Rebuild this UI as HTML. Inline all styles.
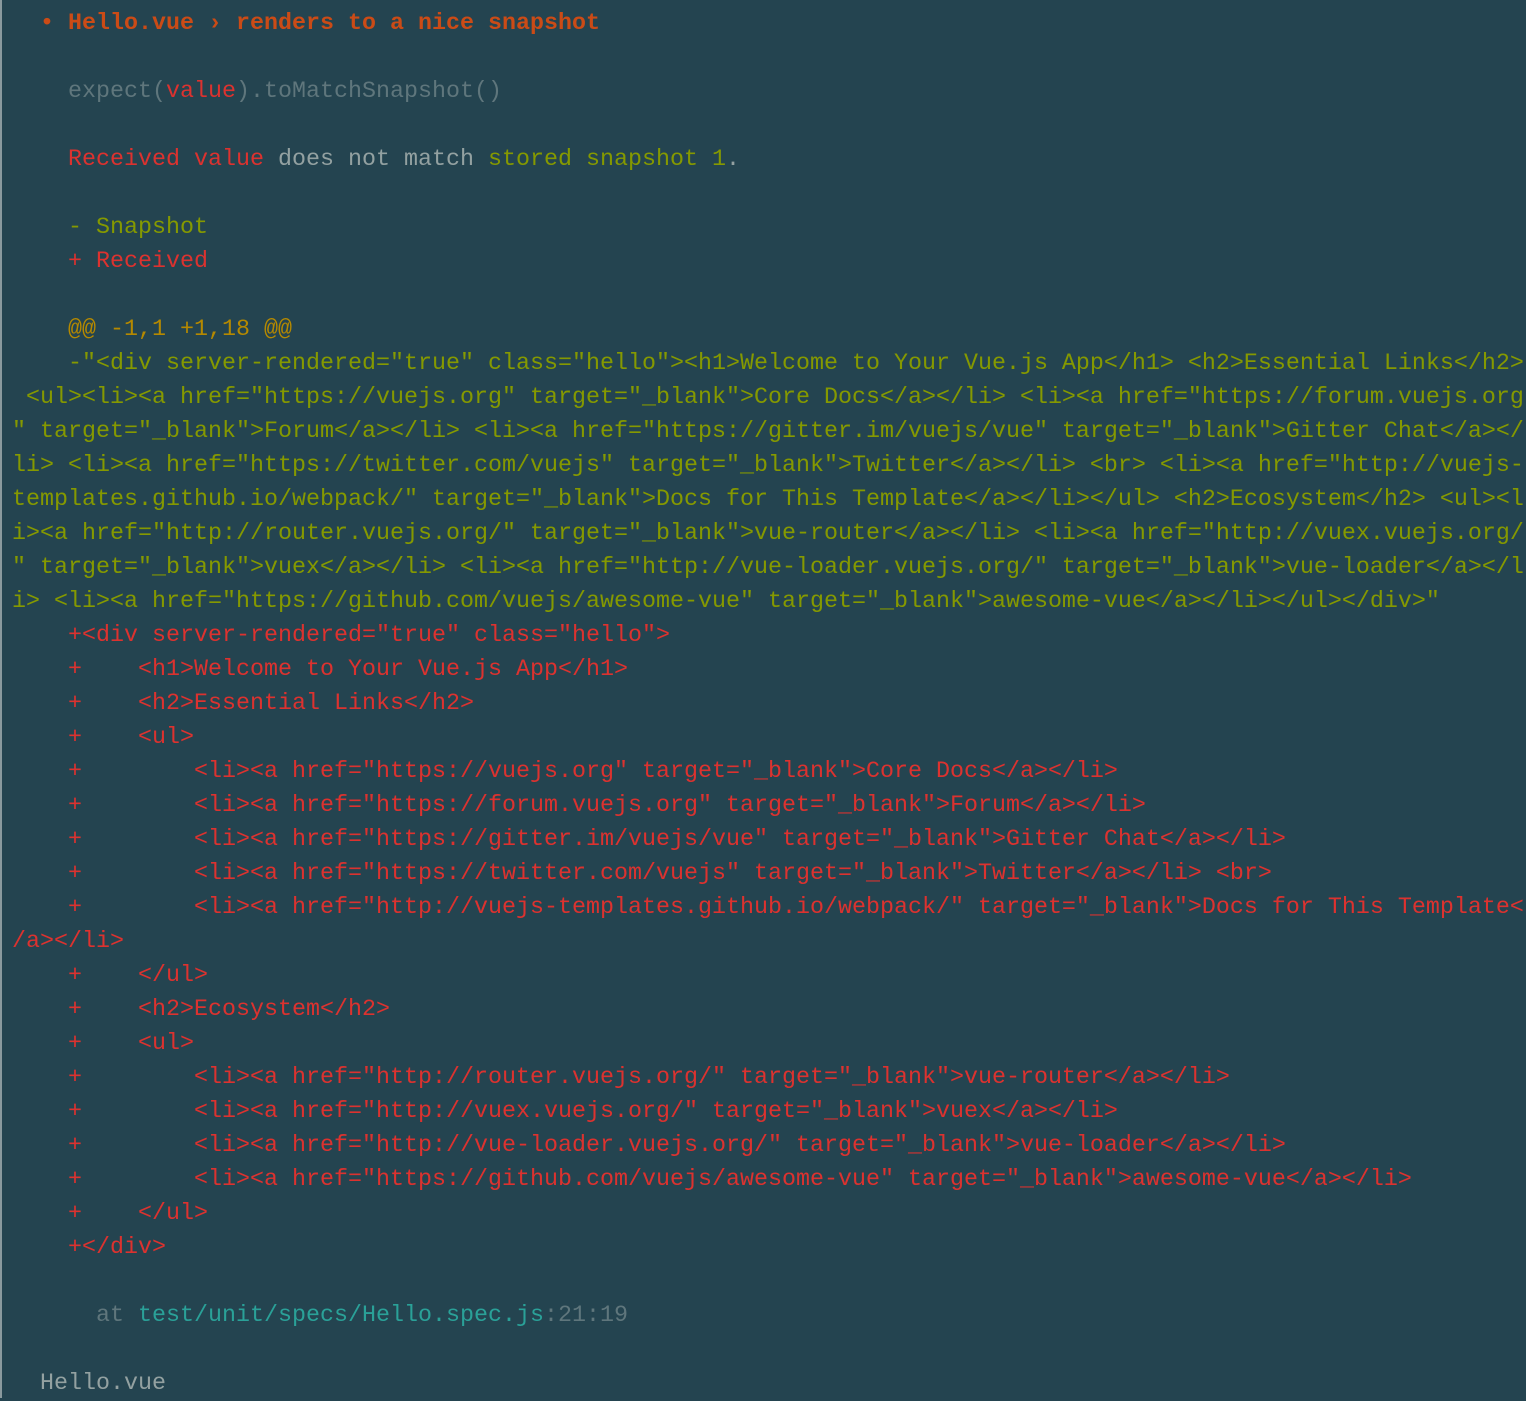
<!DOCTYPE html>
<html><head><meta charset="utf-8"><style>
html,body{margin:0;padding:0;}
body{width:1526px;height:1398px;background:#244450;overflow:hidden;position:relative;font-family:"Liberation Mono","DejaVu Sans Mono",monospace;font-size:23.33px;}
.bl{position:absolute;left:0;top:0;width:2px;height:1398px;background:#8a9a9e;}
.t{position:absolute;left:12px;top:7px;}
.l{height:34px;line-height:34px;white-space:pre;color:#dc322f;}
.o{color:#cb4b16;font-weight:bold}
.g{color:#5f767c}
.r{color:#dc322f}
.w{color:#93a1a1}
.gr{color:#859900}
.y{color:#b58900}
.c{color:#2aa198}
</style></head><body><div class="bl"></div><div class="t">
<div class="l o">  • Hello.vue › renders to a nice snapshot</div>
<div class="l"> </div>
<div class="l g">    expect(<span class="r">value</span>).toMatchSnapshot()</div>
<div class="l"> </div>
<div class="l">    <span class="r">Received value</span><span class="w"> does not match </span><span class="gr">stored snapshot 1</span><span class="w">.</span></div>
<div class="l"> </div>
<div class="l gr">    - Snapshot</div>
<div class="l r">    + Received</div>
<div class="l"> </div>
<div class="l y">    @@ -1,1 +1,18 @@</div>
<div class="l gr">    -"&lt;div server-rendered="true" class="hello"&gt;&lt;h1&gt;Welcome to Your Vue.js App&lt;/h1&gt; &lt;h2&gt;Essential Links&lt;/h2&gt;</div>
<div class="l gr"> &lt;ul&gt;&lt;li&gt;&lt;a href="https://vuejs.org" target="_blank"&gt;Core Docs&lt;/a&gt;&lt;/li&gt; &lt;li&gt;&lt;a href="https://forum.vuejs.org</div>
<div class="l gr">" target="_blank"&gt;Forum&lt;/a&gt;&lt;/li&gt; &lt;li&gt;&lt;a href="https://gitter.im/vuejs/vue" target="_blank"&gt;Gitter Chat&lt;/a&gt;&lt;/</div>
<div class="l gr">li&gt; &lt;li&gt;&lt;a href="https://twitter.com/vuejs" target="_blank"&gt;Twitter&lt;/a&gt;&lt;/li&gt; &lt;br&gt; &lt;li&gt;&lt;a href="http://vuejs-</div>
<div class="l gr">templates.github.io/webpack/" target="_blank"&gt;Docs for This Template&lt;/a&gt;&lt;/li&gt;&lt;/ul&gt; &lt;h2&gt;Ecosystem&lt;/h2&gt; &lt;ul&gt;&lt;l</div>
<div class="l gr">i&gt;&lt;a href="http://router.vuejs.org/" target="_blank"&gt;vue-router&lt;/a&gt;&lt;/li&gt; &lt;li&gt;&lt;a href="http://vuex.vuejs.org/</div>
<div class="l gr">" target="_blank"&gt;vuex&lt;/a&gt;&lt;/li&gt; &lt;li&gt;&lt;a href="http://vue-loader.vuejs.org/" target="_blank"&gt;vue-loader&lt;/a&gt;&lt;/l</div>
<div class="l gr">i&gt; &lt;li&gt;&lt;a href="https://github.com/vuejs/awesome-vue" target="_blank"&gt;awesome-vue&lt;/a&gt;&lt;/li&gt;&lt;/ul&gt;&lt;/div&gt;"</div>
<div class="l">    +&lt;div server-rendered="true" class="hello"&gt;</div>
<div class="l">    +    &lt;h1&gt;Welcome to Your Vue.js App&lt;/h1&gt;</div>
<div class="l">    +    &lt;h2&gt;Essential Links&lt;/h2&gt;</div>
<div class="l">    +    &lt;ul&gt;</div>
<div class="l">    +        &lt;li&gt;&lt;a href="https://vuejs.org" target="_blank"&gt;Core Docs&lt;/a&gt;&lt;/li&gt;</div>
<div class="l">    +        &lt;li&gt;&lt;a href="https://forum.vuejs.org" target="_blank"&gt;Forum&lt;/a&gt;&lt;/li&gt;</div>
<div class="l">    +        &lt;li&gt;&lt;a href="https://gitter.im/vuejs/vue" target="_blank"&gt;Gitter Chat&lt;/a&gt;&lt;/li&gt;</div>
<div class="l">    +        &lt;li&gt;&lt;a href="https://twitter.com/vuejs" target="_blank"&gt;Twitter&lt;/a&gt;&lt;/li&gt; &lt;br&gt;</div>
<div class="l">    +        &lt;li&gt;&lt;a href="http://vuejs-templates.github.io/webpack/" target="_blank"&gt;Docs for This Template&lt;</div>
<div class="l">/a&gt;&lt;/li&gt;</div>
<div class="l">    +    &lt;/ul&gt;</div>
<div class="l">    +    &lt;h2&gt;Ecosystem&lt;/h2&gt;</div>
<div class="l">    +    &lt;ul&gt;</div>
<div class="l">    +        &lt;li&gt;&lt;a href="http://router.vuejs.org/" target="_blank"&gt;vue-router&lt;/a&gt;&lt;/li&gt;</div>
<div class="l">    +        &lt;li&gt;&lt;a href="http://vuex.vuejs.org/" target="_blank"&gt;vuex&lt;/a&gt;&lt;/li&gt;</div>
<div class="l">    +        &lt;li&gt;&lt;a href="http://vue-loader.vuejs.org/" target="_blank"&gt;vue-loader&lt;/a&gt;&lt;/li&gt;</div>
<div class="l">    +        &lt;li&gt;&lt;a href="https://github.com/vuejs/awesome-vue" target="_blank"&gt;awesome-vue&lt;/a&gt;&lt;/li&gt;</div>
<div class="l">    +    &lt;/ul&gt;</div>
<div class="l">    +&lt;/div&gt;</div>
<div class="l"> </div>
<div class="l g">      at <span class="c">test/unit/specs/Hello.spec.js</span>:21:19</div>
<div class="l"> </div>
<div class="l w">  Hello.vue</div>
</div></body></html>
